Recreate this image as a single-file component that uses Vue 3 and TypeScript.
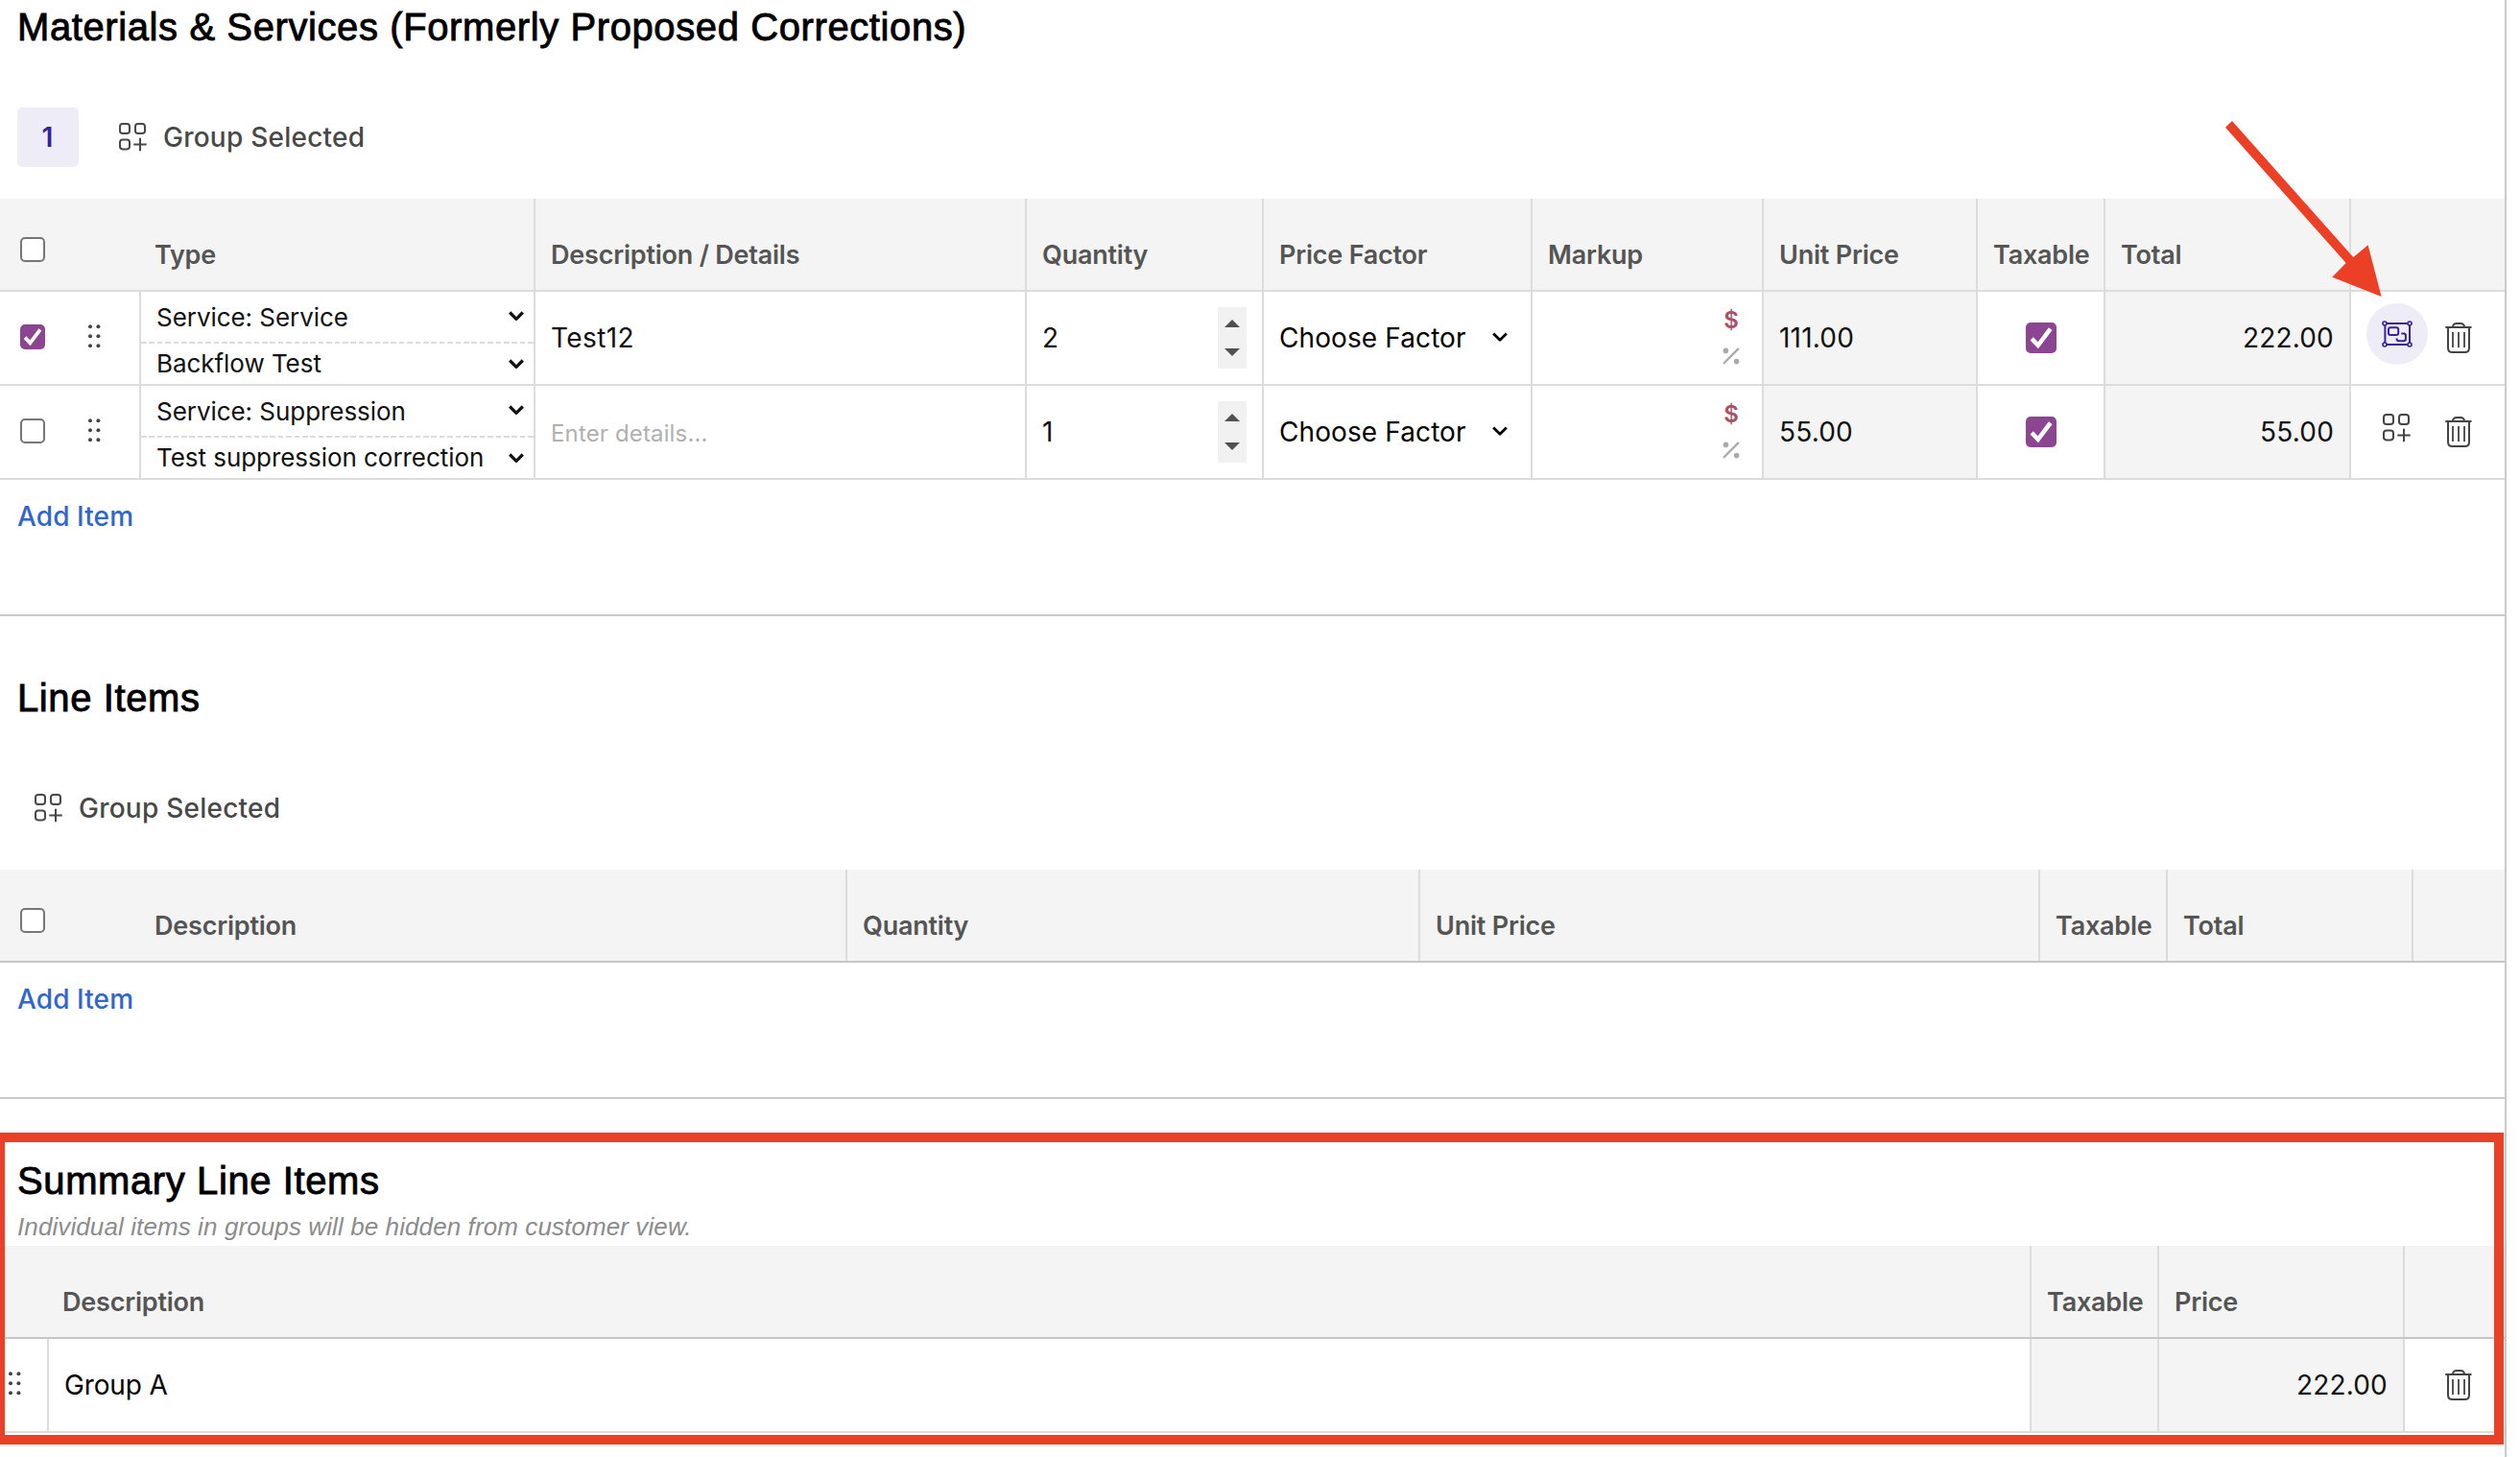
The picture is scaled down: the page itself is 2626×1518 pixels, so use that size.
<script setup lang="ts">
import { ref, h, type FunctionalComponent } from 'vue'

interface MaterialRow {
  selected: boolean
  service: string
  item: string
  details: string
  quantity: number
  unitPrice: string
  taxable: boolean
  total: string
  grouped: boolean
}

const materials = ref<MaterialRow[]>([
  {
    selected: true,
    service: 'Service: Service',
    item: 'Backflow Test',
    details: 'Test12',
    quantity: 2,
    unitPrice: '111.00',
    taxable: true,
    total: '222.00',
    grouped: true,
  },
  {
    selected: false,
    service: 'Service: Suppression',
    item: 'Test suppression correction',
    details: '',
    quantity: 1,
    unitPrice: '55.00',
    taxable: true,
    total: '55.00',
    grouped: false,
  },
])

const summary = ref([{ description: 'Group A', price: '222.00' }])

const materialHeads = ['Description / Details', 'Quantity', 'Price Factor', 'Markup', 'Unit Price', 'Taxable', 'Total', '']
const lineHeads = ['Quantity', 'Unit Price', 'Taxable', 'Total', '']
const summaryHeads = ['Taxable', 'Price', '']

const stroke = (width: number, extra: Record<string, string | number> = {}) => ({
  fill: 'none',
  stroke: 'currentColor',
  'stroke-width': width,
  ...extra,
})

const GroupIcon: FunctionalComponent = () =>
  h('svg', { width: 30, height: 30, viewBox: '0 0 30 30', ...stroke(2) }, [
    h('rect', { x: 1, y: 1, width: 10, height: 10, rx: 2.8 }),
    h('rect', { x: 17, y: 1, width: 10, height: 10, rx: 2.8 }),
    h('rect', { x: 1, y: 17.4, width: 10, height: 10, rx: 2.8 }),
    h('path', { d: 'M22 15.8v13.4M15.3 22.5h13.4' }),
  ])

const UngroupIcon: FunctionalComponent = () =>
  h('svg', { width: 32, height: 28, viewBox: '0 0 32 28', ...stroke(2) }, [
    h('path', { d: 'M5 3h21.6M5 25h21.6M3.4 5v18M29 5v18' }),
    h('circle', { cx: 3, cy: 3, r: 2, 'stroke-width': 1.6 }),
    h('circle', { cx: 29, cy: 3, r: 2, 'stroke-width': 1.6 }),
    h('circle', { cx: 3, cy: 25, r: 2, 'stroke-width': 1.6 }),
    h('circle', { cx: 29, cy: 25, r: 2, 'stroke-width': 1.6 }),
    h('rect', { x: 7, y: 7.3, width: 10.2, height: 7.8, rx: 2 }),
    h('path', { d: 'M20.3 13.4h2.4q2.2 0 2.2 2.2v3.4q0 2.2-2.2 2.2h-5q-2.2 0-2.2-2.6' }),
  ])

const TrashIcon: FunctionalComponent = () =>
  h('svg', { width: 28, height: 32, viewBox: '0 0 28 32', ...stroke(2) }, [
    h('path', { d: 'M.3 5h27.2M7.8 5C8.2 2.2 9.8 1 12 1h4c2.2 0 3.8 1.2 4.2 4' }),
    h('path', { d: 'M3 5v21.5q0 4.5 4.5 4.5h13q4.5 0 4.5-4.5V5' }),
    h('path', { d: 'M8 10v16M14 10v16M20 10v16', 'stroke-width': 1.8 }),
  ])

const DragHandle: FunctionalComponent = () =>
  h(
    'svg',
    { width: 13, height: 25, viewBox: '0 0 13 25', fill: 'currentColor' },
    [2.2, 12.2, 22.2].flatMap((cy) => [2, 10.4].map((cx) => h('circle', { cx, cy, r: 2 }))),
  )

const ChevronDown: FunctionalComponent<{ weight: number }> = (props) =>
  h('svg', { width: 16, height: 11, viewBox: '0 0 16 11', ...stroke(props.weight) }, [
    h('path', { d: 'M1.2 1.5L8 8.3l6.8-6.8', 'stroke-linejoin': 'round' }),
  ])

const CheckMark: FunctionalComponent = () =>
  h('svg', { viewBox: '0 0 32 32', ...stroke(4.6) }, [h('path', { d: 'M6.2 16.8l6.6 7L25.7 6.6' })])
</script>

<template>
  <div class="page">
    <section class="section">
      <h2 class="title">Materials &amp; Services (Formerly Proposed Corrections)</h2>
      <div class="toolbar">
        <span class="count">1</span>
        <button class="group-button"><GroupIcon /><span>Group Selected</span></button>
      </div>
      <div class="row head materials">
        <div class="select"><span class="box"></span></div>
        <div class="plain">Type</div>
        <div v-for="(name, i) in materialHeads" :key="i" class="cell">{{ name }}</div>
      </div>
      <div v-for="(row, i) in materials" :key="i" class="row body materials">
        <div class="select">
          <span class="box" :class="{ checked: row.selected }"><CheckMark v-if="row.selected" /></span>
          <DragHandle class="drag" />
        </div>
        <div class="cell type">
          <div class="choice upper"><span>{{ row.service }}</span><ChevronDown :weight="3.2" /></div>
          <div class="choice lower"><span>{{ row.item }}</span><ChevronDown :weight="3.2" /></div>
        </div>
        <div class="cell">
          <span v-if="row.details" class="details">{{ row.details }}</span>
          <span v-else class="placeholder">Enter details...</span>
        </div>
        <div class="cell quantity">
          <span>{{ row.quantity }}</span>
          <span class="spinner"><i class="up"></i><i class="down"></i></span>
        </div>
        <div class="cell factor"><span>Choose Factor</span><ChevronDown :weight="2.7" /></div>
        <div class="cell markup">
          <span class="dollar">$</span>
          <svg class="percent" width="18" height="18" viewBox="0 0 18 18">
            <path d="M1.6 16.2L16.2 1.6" fill="none" stroke="currentColor" stroke-width="2.3" stroke-linecap="round" />
            <circle cx="3.4" cy="3.4" r="2.8" fill="currentColor" />
            <circle cx="14.6" cy="14.6" r="2.8" fill="currentColor" />
          </svg>
        </div>
        <div class="cell shaded">{{ row.unitPrice }}</div>
        <div class="cell taxable">
          <span class="box large" :class="{ checked: row.taxable }"><CheckMark v-if="row.taxable" /></span>
        </div>
        <div class="cell shaded amount">{{ row.total }}</div>
        <div class="cell actions">
          <span class="round" :class="{ active: row.grouped }">
            <UngroupIcon v-if="row.grouped" />
            <GroupIcon v-else />
          </span>
          <TrashIcon />
        </div>
      </div>
      <div class="footer"><a class="add">Add Item</a></div>
    </section>

    <section class="section spaced">
      <h2 class="title">Line Items</h2>
      <div class="toolbar">
        <button class="group-button"><GroupIcon /><span>Group Selected</span></button>
      </div>
      <div class="row head lines strong">
        <div class="select"><span class="box"></span></div>
        <div class="plain">Description</div>
        <div v-for="(name, i) in lineHeads" :key="i" class="cell">{{ name }}</div>
      </div>
      <div class="footer"><a class="add">Add Item</a></div>
    </section>

    <section class="summary">
      <h2 class="title">Summary Line Items</h2>
      <p class="note">Individual items in groups will be hidden from customer view.</p>
      <div class="row head totals strong">
        <div></div>
        <div class="plain">Description</div>
        <div v-for="(name, i) in summaryHeads" :key="i" class="cell">{{ name }}</div>
      </div>
      <div v-for="(row, i) in summary" :key="i" class="row body totals">
        <div class="handle"><DragHandle /></div>
        <div class="cell group-name">{{ row.description }}</div>
        <div class="cell shaded"></div>
        <div class="cell shaded amount">{{ row.price }}</div>
        <div class="cell remove"><TrashIcon /></div>
      </div>
    </section>

    <div class="highlight"></div>
    <svg class="arrow" width="170" height="190" viewBox="2315 122 170 190">
      <path
        d="M2326 126L2452.300 268L2467.600 255.300L2481.600 309L2430.300 288.700L2444.700 274L2319 132.700Z"
        fill="#ec4026"
      />
    </svg>
  </div>
</template>

<style>
body {
  background: #fff;
}
</style>

<style scoped>
.page,
.page * {
  box-sizing: border-box;
}
.page {
  position: relative;
  width: 2626px;
  height: 1518px;
  overflow: hidden;
  padding-right: 14px;
  background: #fff;
  color: #111;
  font: 28px/34px Inter, 'Liberation Sans', sans-serif;
}
.page svg {
  display: block;
  flex: none;
}
.section,
.summary {
  border-right: 2px solid #cacaca;
}
.section {
  padding-top: 5px;
}
.spaced {
  padding-top: 62px;
}
.summary {
  height: 373px;
  padding-top: 62px;
}
.title {
  margin: 0;
  padding-left: 18px;
  font: 400 40px/46px 'Liberation Sans', Arial, sans-serif;
  letter-spacing: 0.6px;
  color: #000;
  -webkit-text-stroke: 0.9px #000;
}
.toolbar {
  display: flex;
  align-items: center;
  gap: 24px;
  height: 62px;
  margin: 61px 0 33px;
  padding-left: 18px;
}
.count {
  width: 64px;
  height: 62px;
  border-radius: 5px;
  background: #eeecf6;
  color: #38229a;
  font-weight: 600;
  line-height: 63px;
  text-align: center;
  padding-right: 1px;
}
.group-button {
  display: flex;
  align-items: center;
  gap: 16px;
  border: 0;
  padding: 0 18px;
  background: none;
  color: #484848;
  font: inherit;
  font-weight: 500;
  letter-spacing: 0.24px;
}
.row {
  display: grid;
  border-bottom: 2px solid #dcdcdc;
}
.materials {
  grid-template-columns: 145px 411px 512px 247px 280px 241px 223px 133px 256px 162px;
}
.lines {
  grid-template-columns: 145px 736px 597px 646px 133px 256px 97px;
}
.totals {
  grid-template-columns: 49px 2066px 133px 256px 106px;
}
.head {
  height: 97px;
  background: #f4f4f4;
  color: #555;
  font-size: 27px;
  font-weight: 600;
  letter-spacing: -0.22px;
}
.strong {
  border-bottom-color: #c6c6c6;
}
.cell {
  border-left: 2px solid #dcdcdc;
  padding-left: 16px;
}
.head .cell,
.head .plain {
  padding-top: 42px;
  white-space: nowrap;
}
.plain {
  padding-left: 16px;
}
.body {
  height: 98px;
}
.body .cell {
  display: flex;
  align-items: center;
}
.select {
  display: flex;
  padding-left: 21px;
}
.head .select {
  padding-top: 40px;
}
.body .select {
  align-items: center;
  gap: 45px;
  padding-bottom: 2px;
}
.drag {
  margin-bottom: 2px;
}
.drag,
.handle {
  color: #444;
}
.box {
  display: block;
  flex: none;
  width: 26px;
  height: 26px;
  border: 2px solid #767676;
  border-radius: 5px;
  background: #fff;
}
.box.checked {
  border: 0;
  background: #8b4591;
  color: #fff;
}
.box.large {
  width: 32px;
  height: 32px;
}
.body .type {
  display: block;
  padding-left: 0;
}
.choice {
  display: flex;
  justify-content: space-between;
  align-items: center;
  padding-left: 16px;
  padding-right: 10px;
  font-size: 26px;
  line-height: 32px;
  letter-spacing: -0.05px;
  color: #111;
}
.upper {
  height: 54px;
  padding-top: 8px;
  padding-bottom: 11px;
  background: repeating-linear-gradient(90deg, #dcdcdc 0 5.6px, transparent 5.6px 8.4px) bottom / 100% 2px no-repeat;
}
.upper span {
  padding-top: 2px;
}
.lower {
  height: 42px;
}
.details {
  letter-spacing: 0.4px;
}
.placeholder {
  padding-top: 3px;
  font-size: 24px;
  letter-spacing: 0.15px;
  color: #b0b0b0;
}
.body .quantity {
  justify-content: space-between;
  padding-right: 16px;
}
.spinner {
  display: flex;
  flex-direction: column;
  align-items: center;
  gap: 22px;
  width: 30px;
  height: 64px;
  padding-top: 13px;
  background: #f1f1f1;
}
.spinner i {
  border: 8px solid transparent;
  border-top-width: 0;
  border-bottom-width: 0;
}
.spinner .up {
  border-bottom: 8px solid #505050;
}
.spinner .down {
  border-top: 8px solid #505050;
}
.body .factor {
  justify-content: space-between;
  padding-right: 24px;
  padding-bottom: 1px;
  letter-spacing: 0.1px;
  color: #000;
}
.body .markup {
  flex-direction: column;
  align-items: flex-end;
  justify-content: flex-start;
  padding-top: 14px;
  padding-right: 23px;
}
.dollar {
  width: 18px;
  font-size: 24px;
  font-weight: 600;
  line-height: 32px;
  text-align: center;
  color: #a9506b;
}
.percent {
  margin-top: 12px;
  color: #aaa;
}
.shaded {
  background: #f4f4f4;
  letter-spacing: 0.2px;
}
.body .amount {
  justify-content: flex-end;
  padding-right: 16px;
}
.body .taxable {
  justify-content: center;
  padding-left: 0;
}
.body .actions {
  gap: 18px;
  padding-left: 16px;
  color: #444;
}
.round {
  display: flex;
  align-items: center;
  justify-content: center;
  width: 64px;
  height: 64px;
  margin-bottom: 8px;
  border-radius: 50%;
}
.round.active {
  background: #eeecf6;
  color: #38229a;
}
.footer {
  height: 142px;
  padding: 21px 0 0 18px;
  border-bottom: 2px solid #cacaca;
}
.add {
  color: #2f66cf;
  font-weight: 500;
  letter-spacing: 0.1px;
}
.note {
  margin: 10px 0 0;
  height: 35px;
  padding-left: 18px;
  font: italic 26px/30px 'Liberation Sans', Arial, sans-serif;
  letter-spacing: 0.1px;
  color: #8c8c8c;
}
.handle {
  display: flex;
  align-items: center;
  padding: 0 0 4px 9px;
}
.group-name {
  letter-spacing: -0.15px;
  color: #000;
}
.body .remove {
  justify-content: flex-end;
  padding-right: 34px;
  color: #444;
}
.highlight {
  position: absolute;
  left: -5px;
  top: 1180px;
  width: 2614px;
  height: 325px;
  border: 10px solid #ec4026;
}
.arrow {
  position: absolute;
  left: 2315px;
  top: 122px;
}
</style>
